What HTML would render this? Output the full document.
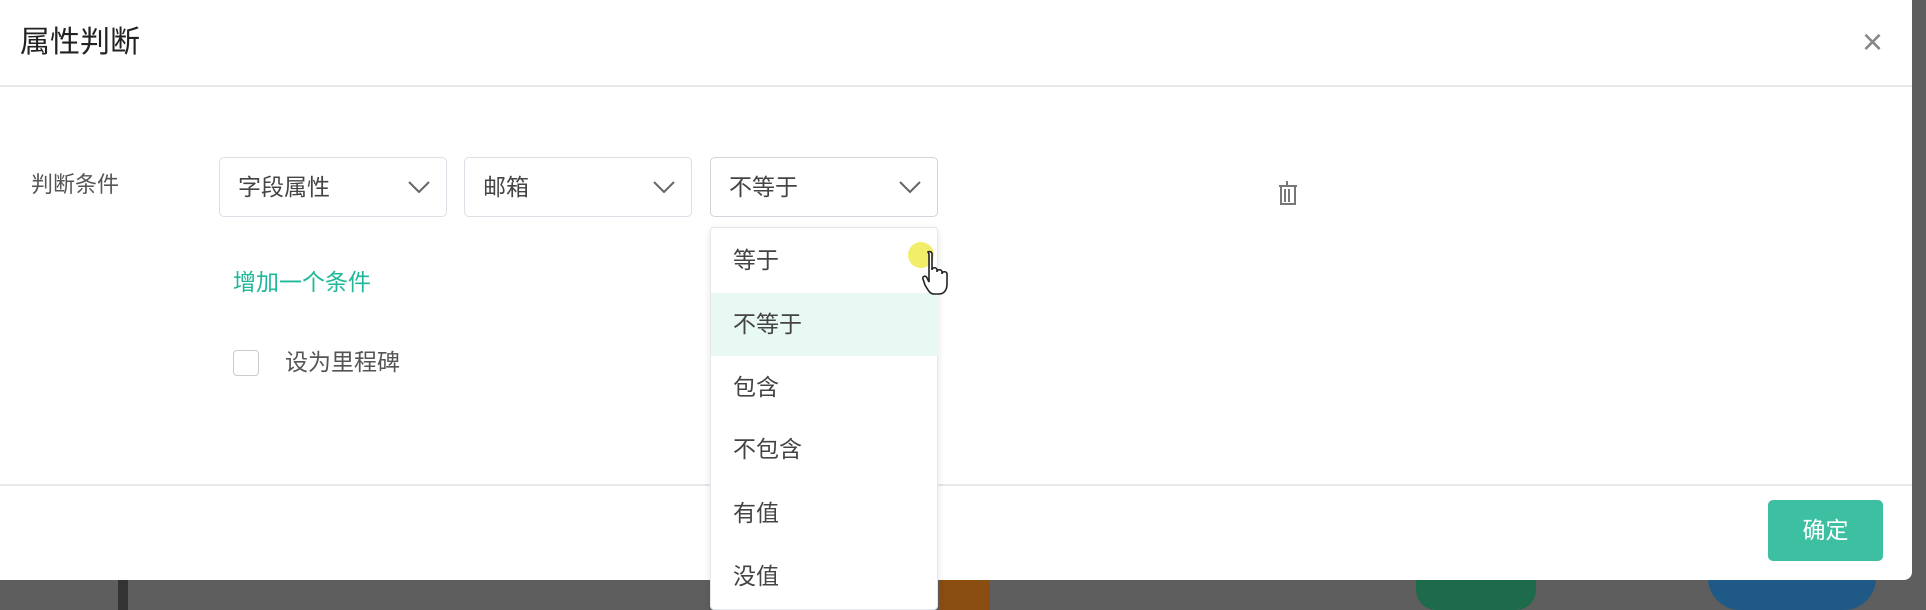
<!DOCTYPE html>
<html><head><meta charset="utf-8"><style>
*{margin:0;padding:0;box-sizing:border-box}
body{width:1926px;height:610px;position:relative;overflow:hidden;background:#5e5e5e;font-family:"Liberation Sans","Noto Sans CJK SC",sans-serif;color:#333}
.abs{position:absolute}
.modal{left:0;top:0;width:1912px;height:580px;background:#fff;border-radius:0 0 8px 0}
.sel{top:157px;height:60px;width:228px;border:1px solid #dcdfe6;border-radius:5px;background:#fff;font-size:23px;color:#444;line-height:58px;padding-left:18px}
.sel svg{position:absolute;right:16px;top:22px}
.item{left:0;width:227px;height:63px;font-size:23px;color:#444;line-height:63px;padding-left:22px}
.t{line-height:30px}
</style></head><body>
<div class="abs" style="left:118px;top:580px;width:10px;height:30px;background:#333"></div>
<div class="abs" style="left:940px;top:580px;width:50px;height:30px;background:#8a4d12"></div>
<div class="abs" style="left:1416px;top:578px;width:120px;height:32px;background:#1e6b4c;border-radius:0 0 20px 20px"></div>
<div class="abs" style="left:1708px;top:578px;width:168px;height:32px;background:#1f5a86;border-radius:0 0 60px 60px"></div>
<div class="abs modal">
 <div class="abs" style="left:20px;top:24px;font-size:30px;line-height:38px;color:#222">属性判断</div>
 <div class="abs" style="left:1862px;top:22px;font-size:36px;color:#888;line-height:40px">×</div>
 <div class="abs" style="left:0;top:85px;width:1912px;height:2px;background:#e6e8eb"></div>
 <div class="abs t" style="left:31px;top:170px;font-size:22px;color:#555">判断条件</div>
 <div class="abs sel" style="left:219px">字段属性<svg width="22" height="14"><path d="M1 2 L11 12 L21 2" fill="none" stroke="#666" stroke-width="2"/></svg></div>
 <div class="abs sel" style="left:464px">邮箱<svg width="22" height="14"><path d="M1 2 L11 12 L21 2" fill="none" stroke="#666" stroke-width="2"/></svg></div>
 <div class="abs sel" style="left:710px;border-color:#cfd5db">不等于<svg width="22" height="14"><path d="M1 2 L11 12 L21 2" fill="none" stroke="#666" stroke-width="2"/></svg></div>
 <svg class="abs" style="left:1277px;top:180px" width="22" height="26"><path d="M10 1v4M2 6h18M4 6v18h14V6M8 9v13M12 9v13" fill="none" stroke="#777" stroke-width="2"/></svg>
 <div class="abs t" style="left:233px;top:267px;font-size:23px;color:#1fb898">增加一个条件</div>
 <div class="abs" style="left:233px;top:350px;width:26px;height:26px;border:1px solid #ccc;border-radius:4px"></div>
 <div class="abs t" style="left:285px;top:347px;font-size:23px;color:#555">设为里程碑</div>
 <div class="abs" style="left:0;top:484px;width:1912px;height:2px;background:#e6e8eb"></div>
 <div class="abs" style="left:1768px;top:500px;width:115px;height:61px;background:#3dbfa1;border-radius:5px;color:#fff;font-size:23px;line-height:61px;text-align:center">确定</div>
</div>
<div class="abs" style="left:710px;top:227px;width:228px;height:383px;background:#fff;border:1px solid #e4e7ed;border-radius:4px;box-shadow:0 2px 8px rgba(0,0,0,.1)">
 <div class="abs item" style="top:1px">等于</div>
 <div class="abs item" style="top:65px;background:#e8f8f2">不等于</div>
 <div class="abs item" style="top:128px">包含</div>
 <div class="abs item" style="top:190px">不包含</div>
 <div class="abs item" style="top:254px">有值</div>
 <div class="abs item" style="top:317px">没值</div>
</div>
<div class="abs" style="left:908px;top:242px;width:26px;height:26px;border-radius:50%;background:#f0ec5a;opacity:.9"></div>
<svg class="abs" style="left:922px;top:250px" width="30" height="48"><path d="M6 2c2-1 4 0 4 2v16c0-3 5-3 5 0v2c0-3 5-3 5 0v2c0-3 5-3 5 0v10c0 6-3 10-8 10h-5c-4 0-6-4-9-9l-2-6c-1-3 3-4 4-1l2 4V4z" fill="#fff" stroke="#222" stroke-width="1.6"/></svg>
</body></html>
